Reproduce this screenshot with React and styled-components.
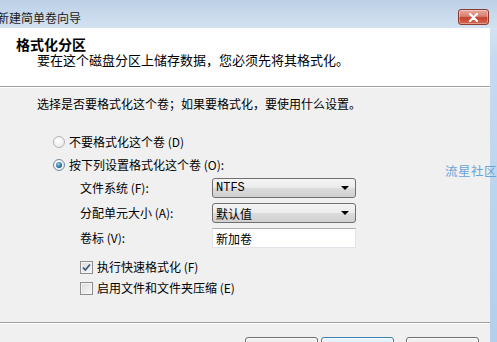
import React from 'react';
import styled, { createGlobalStyle } from 'styled-components';

const GlobalStyle = createGlobalStyle`
    html, body { margin: 0; padding: 0; background: #ffffff; }
    body {
        font-family: "Noto Sans CJK SC", "Liberation Sans", sans-serif;
        font-size: 12px;
        color: #000;
    }
`;

const Screen = styled.div`
    position: relative;
    width: 497px;
    height: 342px;
    overflow: hidden;
`;

const Window = styled.div`
    display: flex;
    flex-direction: column;
    width: 100%;
    height: 100%;
    background: linear-gradient(to bottom, #bcd0e6 0px, #d3e2f1 28px, #c4daf0 60px, #b3cfec 100%);
`;

const TitleBar = styled.div`
    display: flex;
    align-items: flex-start;
    height: 28px;
    flex-shrink: 0;
`;

const TitleText = styled.div`
    margin: 10px 0 0 -3px;
    line-height: 16px;
    font-size: 12px;
    color: #1b1b1b;
`;

const CloseButton = styled.div`
    display: flex;
    align-items: center;
    justify-content: center;
    margin: 9px 8px 0 auto;
    width: 31px;
    height: 16px;
    box-sizing: border-box;
    border: 1px solid #8b3b32;
    border-radius: 3px;
    background: linear-gradient(to bottom, #e8aaa0 0%, #d9806f 45%, #c4402f 55%, #d56a52 100%);
    box-shadow: inset 0 0 0 1px rgba(255, 255, 255, 0.35);
`;

const Client = styled.div`
    display: flex;
    flex-direction: column;
    flex: 1;
    margin-right: 7px;
    background: #f0f0f0;
`;

const Header = styled.div`
    height: 59px;
    box-sizing: border-box;
    padding: 9px 0 0 16px;
    background: #fff;
    border-bottom: 1px solid #a0a0a0;
`;

const HeaderTitle = styled.div`
    font-size: 14px;
    font-weight: bold;
    line-height: 15px;
`;

const HeaderSub = styled.div`
    margin: 1px 0 0 21px;
    font-size: 13px;
    line-height: 14px;
`;

const Body = styled.div`
    height: 236px;
    box-sizing: border-box;
    padding: 8px 0 0 37px;
    border-top: 1px solid #ffffff;
    border-bottom: 1px solid #a0a0a0;
`;

const Prompt = styled.div`
    line-height: 16px;
`;

const OptionList = styled.div`
    display: flex;
    flex-direction: column;
    gap: 7px;
    margin: 22px 0 0 16px;
`;

const OptionRow = styled.label`
    display: flex;
    align-items: center;
    gap: 4px;
    height: 16px;
    line-height: 16px;
`;

const Radio = styled.span`
    display: inline-flex;
    align-items: center;
    justify-content: center;
    width: 12px;
    height: 12px;
    box-sizing: border-box;
    border-radius: 50%;
    border: 1px solid ${p => (p.$checked ? '#6f8aa3' : '#b3b3b3')};
    background: radial-gradient(circle at 40% 35%, #ffffff 0%, #e6e6e6 100%);

    &::after {
        content: '';
        display: ${p => (p.$checked ? 'block' : 'none')};
        width: 6px;
        height: 6px;
        border-radius: 50%;
        background: radial-gradient(circle at 40% 35%, #8fd0ee 0%, #1b5d8c 70%, #123e63 100%);
    }
`;

const FormGrid = styled.div`
    display: grid;
    grid-template-columns: 132px 144px;
    grid-auto-rows: 20px;
    row-gap: 5px;
    align-items: center;
    margin: 5px 0 0 43px;
`;

const FieldLabel = styled.div`
    line-height: 16px;
`;

const Select = styled.div`
    display: flex;
    align-items: center;
    height: 20px;
    box-sizing: border-box;
    padding: 0 6px 0 3px;
    border: 1px solid #707070;
    border-radius: 3px;
    background: linear-gradient(to bottom, #f5f5f5 0%, #ebebeb 50%, #dcdcdc 51%, #d0d0d0 100%);
    font-family: ${p => (p.$mono ? '"Liberation Mono", monospace' : 'inherit')};
    font-size: 12px;

    span { flex: 1; }
`;

const Arrow = styled.span`
    flex: none !important;
    width: 0;
    height: 0;
    border-left: 4px solid transparent;
    border-right: 4px solid transparent;
    border-top: 4px solid #000;
`;

const TextInput = styled.div`
    display: flex;
    align-items: center;
    height: 20px;
    box-sizing: border-box;
    padding: 0 3px;
    border: 1px solid #e2e3ea;
    border-top-color: #abadb3;
    background: #fff;
`;

const CheckList = styled.div`
    display: flex;
    flex-direction: column;
    gap: 5px;
    margin: 11px 0 0 43px;
`;

const Checkbox = styled.span`
    position: relative;
    width: 13px;
    height: 13px;
    box-sizing: border-box;
    border: 1px solid #8f8f8f;
    background: linear-gradient(135deg, #dcdcdc 0%, #f7f7f7 100%);
    box-shadow: inset 0 0 0 1px #f4f4f4;
`;

const Footer = styled.div`
    display: flex;
    justify-content: flex-end;
    gap: 3px;
    padding: 13px 11px 0 0;
    border-top: 1px solid #ffffff;
`;

const Button = styled.div`
    display: flex;
    align-items: center;
    justify-content: center;
    width: 73px;
    height: 23px;
    box-sizing: border-box;
    margin-left: ${p => (p.$spaced ? '9px' : '0')};
    border: 1px solid ${p => (p.$focused ? '#3c7fb1' : '#707070')};
    border-radius: 3px;
    background: ${p => (p.$focused
        ? 'linear-gradient(to bottom, #e8f4fc 0%, #d6ebf9 50%, #bfe1f6 51%, #a9d6f3 100%)'
        : 'linear-gradient(to bottom, #f2f2f2 0%, #ebebeb 50%, #dddddd 51%, #cfcfcf 100%)')};
    box-shadow: inset 0 0 0 1px rgba(255, 255, 255, 0.7);
`;

const Watermark = styled.div`
    position: absolute;
    left: 445px;
    top: 163px;
    font-size: 12.5px;
    line-height: 16px;
    color: #6aa3d8;
    letter-spacing: 0.5px;
`;

function CheckMark() {
    return (
        <svg width="13" height="13" viewBox="0 0 13 13" style={{ position: 'absolute', left: -1, top: -1 }}>
            <path d="M3 6.5 L5.3 9 L10 3.5" fill="none" stroke="#3a5a7c" strokeWidth="1.8" />
        </svg>
    );
}

export default function App() {
    return (
        <Screen>
            <GlobalStyle />
            <Window>
                <TitleBar>
                    <TitleText>新建简单卷向导</TitleText>
                    <CloseButton>
                        <svg width="11" height="9" viewBox="0 0 11 9">
                            <path d="M2 1 L9 8 M9 1 L2 8" stroke="#fff" strokeWidth="2.2" strokeLinecap="round" />
                        </svg>
                    </CloseButton>
                </TitleBar>
                <Client>
                    <Header>
                        <HeaderTitle>格式化分区</HeaderTitle>
                        <HeaderSub>要在这个磁盘分区上储存数据，您必须先将其格式化。</HeaderSub>
                    </Header>
                    <Body>
                        <Prompt>选择是否要格式化这个卷；如果要格式化，要使用什么设置。</Prompt>
                        <OptionList>
                            <OptionRow><Radio />不要格式化这个卷 (D)</OptionRow>
                            <OptionRow><Radio $checked />按下列设置格式化这个卷 (O):</OptionRow>
                        </OptionList>
                        <FormGrid>
                            <FieldLabel>文件系统 (F):</FieldLabel>
                            <Select $mono><span>NTFS</span><Arrow /></Select>
                            <FieldLabel>分配单元大小 (A):</FieldLabel>
                            <Select><span>默认值</span><Arrow /></Select>
                            <FieldLabel>卷标 (V):</FieldLabel>
                            <TextInput>新加卷</TextInput>
                        </FormGrid>
                        <CheckList>
                            <OptionRow><Checkbox><CheckMark /></Checkbox>执行快速格式化 (F)</OptionRow>
                            <OptionRow><Checkbox />启用文件和文件夹压缩 (E)</OptionRow>
                        </CheckList>
                    </Body>
                    <Footer>
                        <Button>&lt; 上一步(B)</Button>
                        <Button $focused>下一步(N) &gt;</Button>
                        <Button $spaced>取消</Button>
                    </Footer>
                </Client>
            </Window>
            <Watermark>流星社区</Watermark>
        </Screen>
    );
}
